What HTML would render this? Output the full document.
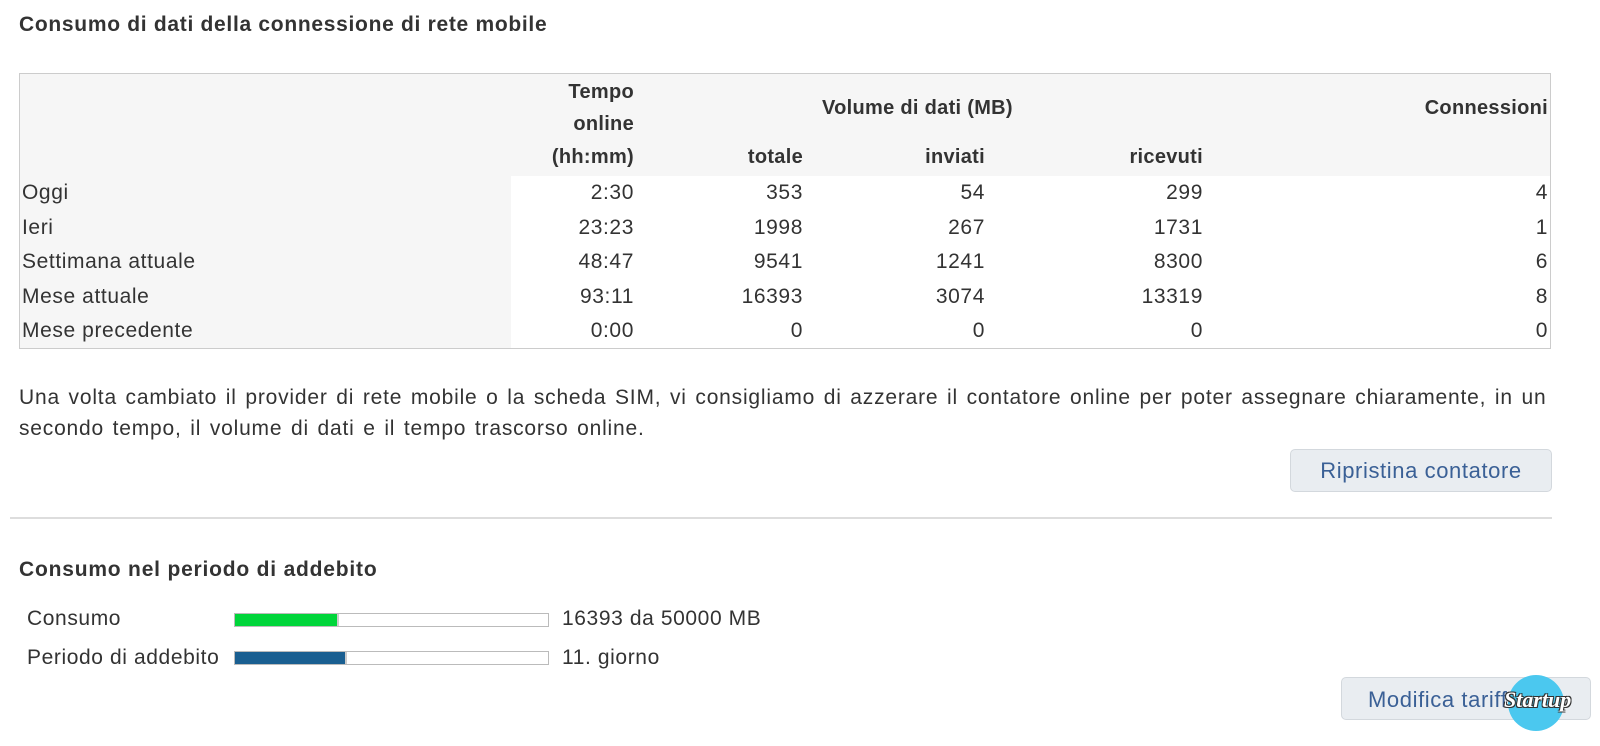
<!DOCTYPE html>
<html><head><style>
body{margin:0;width:1600px;height:746px;background:#fff;font-family:"Liberation Sans",sans-serif;color:#333;position:relative;overflow:hidden}
.a{position:absolute;white-space:nowrap;font-size:21px;line-height:24px;letter-spacing:0.6px}
.b{font-weight:bold;font-size:20px;letter-spacing:0.3px}
.r{text-align:right}
.btn{position:absolute;background:#e9edf1;border:1px solid #d3d8dd;border-radius:5px;color:#3a6096;font-size:22px;letter-spacing:0.6px;text-align:center;box-sizing:border-box}
</style></head><body>
<div class="a b" style="left:19px;top:13px;font-size:21px;letter-spacing:0.7px">Consumo di dati della connessione di rete mobile</div>
<div style="position:absolute;left:19px;top:73px;width:1532px;height:276px;border:1px solid #ccc;box-sizing:border-box;background:#f6f6f6"></div>
<div style="position:absolute;left:511px;top:176px;width:1039px;height:172px;background:#fff"></div>
<div class="a b r" style="right:966px;top:80px">Tempo</div>
<div class="a b r" style="right:966px;top:112px">online</div>
<div class="a b r" style="right:966px;top:145px">(hh:mm)</div>
<div class="a b" style="left:822px;top:96px">Volume di dati (MB)</div>
<div class="a b r" style="right:52px;top:96px">Connessioni</div>
<div class="a b r" style="right:797px;top:145px">totale</div>
<div class="a b r" style="right:615px;top:145px">inviati</div>
<div class="a b r" style="right:397px;top:145px">ricevuti</div>
<div id="rows"></div>
<div class="a" style="left:19px;top:382px;font-size:21px;line-height:31px;letter-spacing:0.8px;word-spacing:2px">Una volta cambiato il provider di rete mobile o la scheda SIM, vi consigliamo di azzerare il contatore online per poter assegnare chiaramente, in un<br>secondo tempo, il volume di dati e il tempo trascorso online.</div>
<div class="btn" style="left:1290px;top:449px;width:262px;height:43px;line-height:41px">Ripristina contatore</div>
<div style="position:absolute;left:10px;top:517px;width:1542px;height:2px;background:#ddd"></div>
<div class="a b" style="left:19px;top:558px;font-size:21px;letter-spacing:0.8px">Consumo nel periodo di addebito</div>
<div class="a" style="left:27px;top:607px">Consumo</div>
<div class="a" style="left:27px;top:646px">Periodo di addebito</div>
<div style="position:absolute;left:234px;top:613px;width:315px;height:14px;border:1px solid #bbb;box-sizing:border-box;background:#fff"><div style="width:102px;height:12px;background:#00d53a;border-right:2px solid #ccc"></div></div>
<div style="position:absolute;left:234px;top:651px;width:315px;height:14px;border:1px solid #bbb;box-sizing:border-box;background:#fff"><div style="width:110px;height:12px;background:#1a5f91;border-right:2px solid #ccc"></div></div>
<div class="a" style="left:562px;top:607px">16393 da 50000 MB</div>
<div class="a" style="left:562px;top:646px">11. giorno</div>
<div class="btn" style="left:1341px;top:677px;width:250px;height:43px;line-height:43px;text-align:left;padding-left:26px">Modifica tariffa</div>
<div style="position:absolute;left:1508px;top:675px;width:56px;height:56px;border-radius:50%;background:#4bc8ef"></div>
<div class="a b" style="left:1504px;top:688px;font-style:italic;color:#fff;font-size:22px;letter-spacing:0;text-shadow:1px 1px 0 #333,-1px -1px 0 #333,1px -1px 0 #333,-1px 1px 0 #333;font-family:'Liberation Serif',serif">Startup</div>
<script>
var d=[["Oggi","2:30","353","54","299","4"],["Ieri","23:23","1998","267","1731","1"],["Settimana attuale","48:47","9541","1241","8300","6"],["Mese attuale","93:11","16393","3074","13319","8"],["Mese precedente","0:00","0","0","0","0"]];
var rs=[966,797,615,397,52],h="";
d.forEach(function(r,i){var t=181+i*34.5;h+='<div class="a" style="left:22px;top:'+t+'px">'+r[0]+'</div>';for(var j=1;j<6;j++)h+='<div class="a r" style="right:'+rs[j-1]+'px;top:'+t+'px">'+r[j]+'</div>';});
document.getElementById('rows').outerHTML=h;
</script>
</body></html>
